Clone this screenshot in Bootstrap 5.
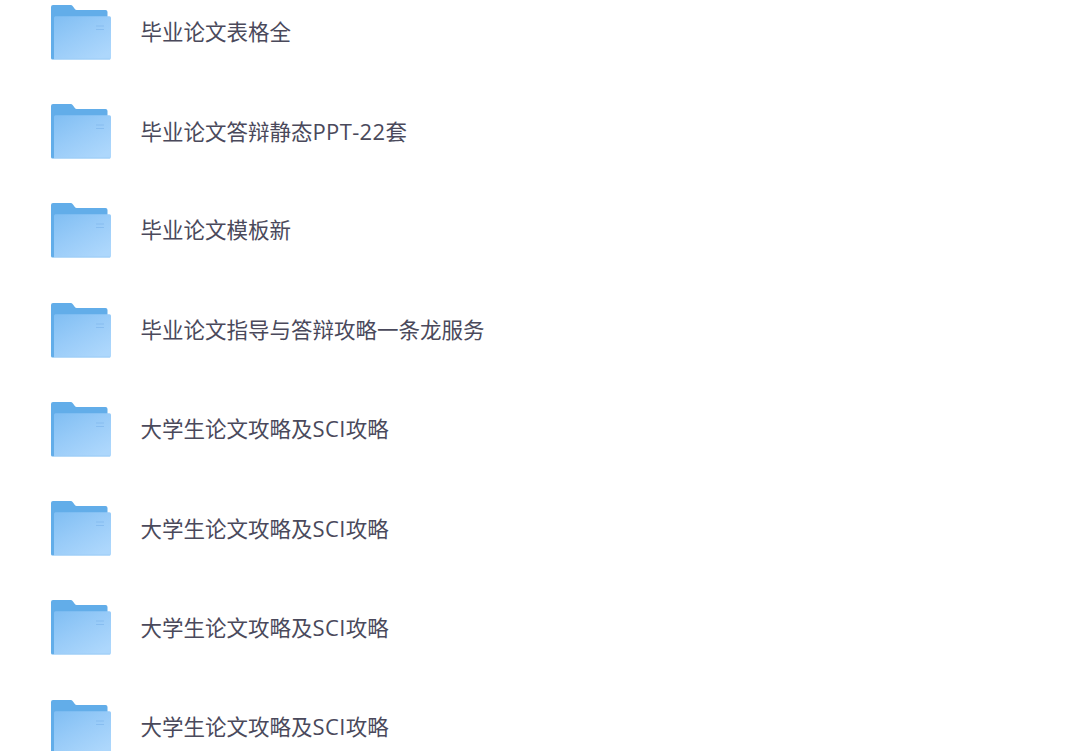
<!DOCTYPE html>
<html lang="zh-CN">
<head>
    <meta charset="UTF-8">
    <title>毕业论文</title>
    <meta name="viewport" content="width=device-width, initial-scale=1.0">
    <link href="https://cdn.jsdelivr.net/npm/bootstrap@5.3.0/dist/css/bootstrap.min.css" rel="stylesheet">
    <style>
        body {
            background-color: #fff;
            font-family: "Open Sans", "Noto Sans CJK SC", sans-serif;
        }
        .file-view {
            height: 100vh;
        }
        /* 列表已向下捲動一小段 */
        .file-list {
            margin-top: -17.3px;
            padding-left: 51px;
        }
        .file-row {
            height: 99.25px;
            gap: 29.5px;
        }
        .folder-icon {
            width: 60px;
            height: 55px;
        }
        .file-name {
            color: #4a495b;
            font-size: 21.5px;
            line-height: 32px;
            padding-bottom: 1px;
        }
        .file-name span {
            font-size: 22px;
            letter-spacing: 0.35px;
        }
    </style>
</head>
<body>
    <!-- 資料夾圖示 -->
    <svg width="0" height="0" class="position-absolute" aria-hidden="true">
        <defs>
            <linearGradient id="folderFront" x1="0" y1="0" x2="0.75" y2="1">
                <stop offset="0" stop-color="#80bef3"/>
                <stop offset="0.5" stop-color="#98cbf8"/>
                <stop offset="1" stop-color="#add7fc"/>
            </linearGradient>
            <symbol id="folder" viewBox="0 0 60 55">
                <path d="M2 0H19.5Q21 0 22 1.4L24 4.3Q24.6 5 25.6 5H54.5Q56.5 5 56.5 7V52H3V54.5H1.5Q0 54.5 0 53V2Q0 0 2 0Z" fill="#62ade9"/>
                <path d="M4.5 11.2H58.5Q60 11.2 60 12.7V53Q60 54.5 58.5 54.5H3V12.7Q3 11.2 4.5 11.2Z" fill="url(#folderFront)"/>
                <path d="M3 54H59" stroke="#9dcdf6" stroke-width="1"/>
                <path d="M45 21H53M45 24.5H53" stroke="#82b9ee" stroke-opacity="0.8" stroke-width="1.2"/>
            </symbol>
        </defs>
    </svg>

    <div class="file-view overflow-hidden">
        <ul class="file-list list-unstyled mb-0">
            <li class="file-row d-flex align-items-center">
                <svg class="folder-icon flex-shrink-0"><use href="#folder"/></svg>
                <div class="file-name text-nowrap">毕业论文表格全</div>
            </li>
            <li class="file-row d-flex align-items-center">
                <svg class="folder-icon flex-shrink-0"><use href="#folder"/></svg>
                <div class="file-name text-nowrap">毕业论文答辩静态<span>PPT-22</span>套</div>
            </li>
            <li class="file-row d-flex align-items-center">
                <svg class="folder-icon flex-shrink-0"><use href="#folder"/></svg>
                <div class="file-name text-nowrap">毕业论文模板新</div>
            </li>
            <li class="file-row d-flex align-items-center">
                <svg class="folder-icon flex-shrink-0"><use href="#folder"/></svg>
                <div class="file-name text-nowrap">毕业论文指导与答辩攻略一条龙服务</div>
            </li>
            <li class="file-row d-flex align-items-center">
                <svg class="folder-icon flex-shrink-0"><use href="#folder"/></svg>
                <div class="file-name text-nowrap">大学生论文攻略及<span>SCI</span>攻略</div>
            </li>
            <li class="file-row d-flex align-items-center">
                <svg class="folder-icon flex-shrink-0"><use href="#folder"/></svg>
                <div class="file-name text-nowrap">大学生论文攻略及<span>SCI</span>攻略</div>
            </li>
            <li class="file-row d-flex align-items-center">
                <svg class="folder-icon flex-shrink-0"><use href="#folder"/></svg>
                <div class="file-name text-nowrap">大学生论文攻略及<span>SCI</span>攻略</div>
            </li>
            <li class="file-row d-flex align-items-center">
                <svg class="folder-icon flex-shrink-0"><use href="#folder"/></svg>
                <div class="file-name text-nowrap">大学生论文攻略及<span>SCI</span>攻略</div>
            </li>
        </ul>
    </div>

    <script src="https://cdn.jsdelivr.net/npm/bootstrap@5.3.0/dist/js/bootstrap.bundle.min.js"></script>
</body>
</html>
